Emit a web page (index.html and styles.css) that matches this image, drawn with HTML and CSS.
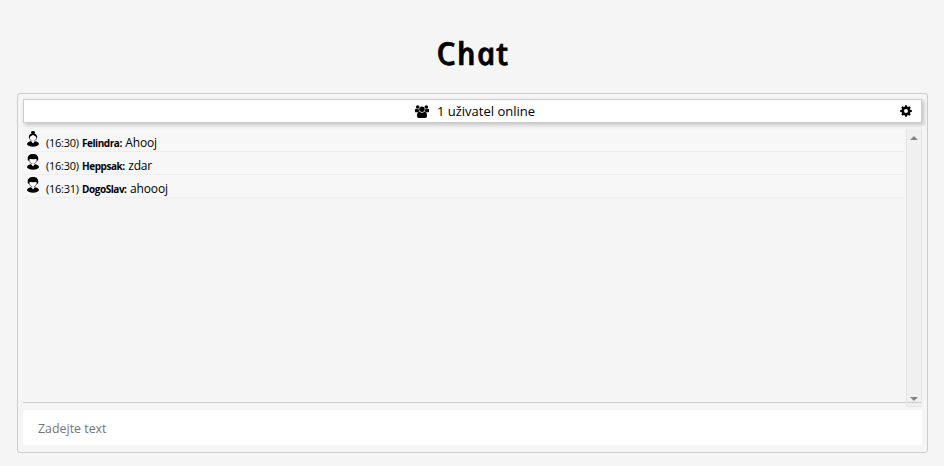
FILE: index.html
```html
<!DOCTYPE html>
<html lang="cs">
<head>
<meta charset="utf-8">
<title>Chat</title>
<link rel="stylesheet" href="styles.css">
</head>
<body>
<svg class="defs" aria-hidden="true">
  <symbol id="man" viewBox="0 0 12 16">
    <path d="M0 13.300C0 11.200 2 10.600 4 10.200L6 12L8 10.200C10 10.600 12 11.200 12 13.300C11.400 15 9 15.700 6 15.700S.6 15 0 13.300Z"/>
    <path fill="#fff" stroke="#000" stroke-width=".6" d="M2.200 3.500C1.300 6.500 3 7.500 3.300 8.500Q4.500 10.300 6 10.300T8.700 8.500C9 7.500 10.700 6.500 9.800 3.500Z"/>
    <path fill="#fff" d="M4.600 9.800H7.400L6 12.400Z"/>
    <path d="M1 6.800C-.2 2 2.500 .1 6 .1S12.200 2 11 6.800L10 6.500L9.500 5Q6 5.300 2.500 5L2 6.500Z"/>
  </symbol>
  <symbol id="woman" viewBox="0 0 12 16">
    <path d="M0 13.300C0 11.200 2 10.600 4 10.200L6 12L8 10.200C10 10.600 12 11.200 12 13.300C11.400 15 9 15.700 6 15.700S.6 15 0 13.300Z"/>
    <ellipse cx="6" cy="1.500" rx="2" ry="1.400"/>
    <path fill="#fff" stroke="#000" stroke-width=".6" d="M2.300 5.500C2 8 3.800 10.300 6 10.300S10 8 9.700 5.500L6 3Z"/>
    <path fill="#fff" d="M4.600 9.800H7.400L6 12.400Z"/>
    <path d="M1.800 7C1.600 3.800 3.500 2.300 6 2.300S10.400 3.800 10.200 7L9.500 6.800L8.300 5L6 4L3.700 5L2.500 6.800Z"/>
  </symbol>
</svg>
<h1 class="title"><span class="upright">Chat</span></h1>
<main class="chat">
  <header class="bar">
    <div class="online">
      <svg class="users" viewBox="0 0 14 13">
        <circle cx="2.700" cy="2" r="1.800"/><circle cx="11.300" cy="2" r="1.800"/><circle cx="7" cy="4.200" r="2.700"/>
        <path d="M0 6.700V5Q0 3.500 1.200 3.700Q2.500 4.500 3.800 4Q3.700 5.500 4.500 6.500Q3.400 6.600 2.800 7.300H1Q0 7.300 0 6.700ZM14 6.700V5Q14 3.500 12.800 3.700Q11.500 4.500 10.200 4Q10.300 5.500 9.500 6.500Q10.600 6.600 11.200 7.300H13Q14 7.300 14 6.700ZM4.600 6.800Q7 8.500 9.400 6.800Q12 7 12 10.800Q12 13 10.200 13H3.800Q2 13 2 10.800Q2 7 4.600 6.800Z"/>
      </svg>
      <span>1 uživatel online</span>
    </div>
    <svg class="gear" viewBox="0 0 12 12">
      <path fill-rule="evenodd" d="M5.100.2H6.900L7.200 1.700L8.100 2.100L9.400 1.300L10.700 2.600L9.900 3.900L10.300 4.800L11.800 5.100V6.900L10.300 7.200L9.900 8.100L10.700 9.400L9.400 10.700L8.100 9.900L7.200 10.300L6.900 11.800H5.100L4.800 10.300L3.900 9.900L2.600 10.700L1.300 9.400L2.100 8.100L1.700 7.200L.2 6.900V5.100L1.700 4.800L2.100 3.900L1.300 2.600L2.600 1.300L3.900 2.100L4.800 1.700ZM6 4A2 2 0 1 0 6 8A2 2 0 1 0 6 4Z"/>
    </svg>
  </header>
  <section class="log">
    <div class="messages">
      <div class="row"><svg class="avatar"><use href="#woman"/></svg><span class="time">(16:30)</span><b class="name">Felindra:</b><span class="text">Ahooj</span></div>
      <div class="row"><svg class="avatar"><use href="#man"/></svg><span class="time">(16:30)</span><b class="name">Heppsak:</b><span class="text">zdar</span></div>
      <div class="row"><svg class="avatar"><use href="#man"/></svg><span class="time">(16:31)</span><b class="name">DogoSlav:</b><span class="text">ahoooj</span></div>
    </div>
    <div class="track">
      <svg class="arrow" viewBox="0 0 8 4"><path d="M0 4L4 0L8 4Z"/></svg>
      <svg class="arrow" viewBox="0 0 8 4"><path d="M0 0H8L4 4Z"/></svg>
    </div>
  </section>
  <input class="entry" type="text" placeholder="Zadejte text">
</main>
</body>
</html>
```
FILE: styles.css
```css
* { box-sizing: border-box; }
body {
  margin: 0;
  padding: 31px 16px 0 17px;
  height: 466px;
  overflow: hidden;
  background: #f5f5f5;
  color: #000;
  font-family: "Open Sans", sans-serif;
}
.defs { display: none; }
.title {
  margin: 0 0 18px;
  height: 44px;
  line-height: 44px;
  text-align: center;
  font-size: 31.500px;
  font-weight: 600;
}
/* The italic cut has the single-storey a; the skew sets it upright. */
.upright {
  display: inline-block;
  font-style: italic;
  letter-spacing: 1.300px;
  transform: skewX(12deg);
  -webkit-text-stroke: .7px #000;
}
.chat {
  display: flex;
  flex-direction: column;
  height: 360px;
  padding: 5px;
  border: 1px solid #ccc;
  border-radius: 3px;
}
.bar {
  display: flex;
  align-items: center;
  height: 24px;
  padding: 0 9px 0 26px;
  background: #fff;
  border: 1px solid #ccc;
  box-shadow: 2px 2px 4px rgba(0, 0, 0, .2);
}
.online {
  flex: 1;
  display: flex;
  align-items: center;
  justify-content: center;
  gap: 8px;
  font-size: 13px;
  line-height: 20px;
}
.users { width: 14px; height: 13px; }
.gear { width: 12px; height: 12px; margin-bottom: 1px; }
.log {
  display: flex;
  height: 274px;
  margin: 6px 0 7px;
  border-bottom: 1px solid #ccc;
}
.messages { flex: 1; padding: 0 2px; }
.row {
  display: flex;
  align-items: baseline;
  height: 23px;
  padding-left: 2px;
  border-bottom: 1px solid #eee;
  background: #f7f7f7;
  line-height: 28px;
  white-space: nowrap;
}
.avatar { width: 12px; height: 16px; margin-right: 7px; align-self: flex-start; margin-top: 2px; }
.time { width: 36px; font-size: 11px; letter-spacing: -.25px; }
.name { font-size: 10px; letter-spacing: -.45px; margin-right: 3.500px; }
.text { font-size: 12px; letter-spacing: -.15px; }
.track {
  display: flex;
  flex-direction: column;
  align-items: center;
  justify-content: space-between;
  width: 16px;
  height: 278px;
  padding: 7px 0 5px;
  border: 1px solid #e6e6e6;
  border-top: 0;
  background: linear-gradient(#ccc, #ccc) 0 273px / 100% 1px no-repeat, #f0f0f0;
}
.arrow { width: 8px; height: 4px; fill: #858585; }
.entry {
  width: 100%;
  height: 35px;
  padding: 2px 15px 0;
  border: 0;
  border-radius: 2px;
  background: #fff;
  font-family: "Open Sans", sans-serif;
  font-size: 12.400px;
}
.entry::placeholder { color: #757575; opacity: 1; }
```
